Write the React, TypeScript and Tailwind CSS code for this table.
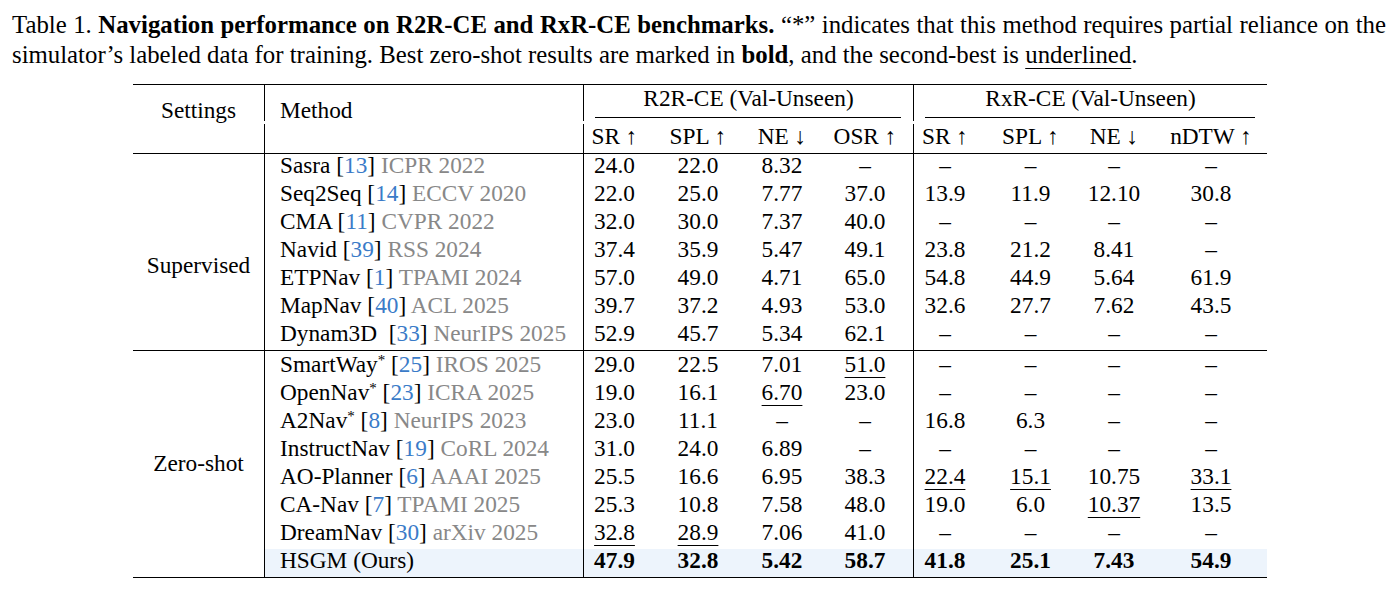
import React from "react";

const GRID = "grid grid-cols-[319px_73px_84px_84px_89px_75px_85px_89px_105px]";

const NUM_CLS = [
  "border-l border-black pr-[11px]",
  "",
  "",
  "pr-[7px]",
  "border-l border-black pr-[12px]",
  "",
  "pr-[7px]",
  "pr-[7px]",
];

type Row = {
  name: string;
  star?: boolean;
  cite?: string;
  venue?: string;
  vals: string[];
  bold?: boolean;
};

const supervised: Row[] = [
  { name: "Sasra", cite: "13", venue: "ICPR 2022", vals: ["24.0", "22.0", "8.32", "–", "–", "–", "–", "–"] },
  { name: "Seq2Seq", cite: "14", venue: "ECCV 2020", vals: ["22.0", "25.0", "7.77", "37.0", "13.9", "11.9", "12.10", "30.8"] },
  { name: "CMA", cite: "11", venue: "CVPR 2022", vals: ["32.0", "30.0", "7.37", "40.0", "–", "–", "–", "–"] },
  { name: "Navid", cite: "39", venue: "RSS 2024", vals: ["37.4", "35.9", "5.47", "49.1", "23.8", "21.2", "8.41", "–"] },
  { name: "ETPNav", cite: "1", venue: "TPAMI 2024", vals: ["57.0", "49.0", "4.71", "65.0", "54.8", "44.9", "5.64", "61.9"] },
  { name: "MapNav", cite: "40", venue: "ACL 2025", vals: ["39.7", "37.2", "4.93", "53.0", "32.6", "27.7", "7.62", "43.5"] },
  { name: "Dynam3D\u00a0", cite: "33", venue: "NeurIPS 2025", vals: ["52.9", "45.7", "5.34", "62.1", "–", "–", "–", "–"] },
];

const zeroShot: Row[] = [
  { name: "SmartWay", star: true, cite: "25", venue: "IROS 2025", vals: ["29.0", "22.5", "7.01", "u:51.0", "–", "–", "–", "–"] },
  { name: "OpenNav", star: true, cite: "23", venue: "ICRA 2025", vals: ["19.0", "16.1", "u:6.70", "23.0", "–", "–", "–", "–"] },
  { name: "A2Nav", star: true, cite: "8", venue: "NeurIPS 2023", vals: ["23.0", "11.1", "–", "–", "16.8", "6.3", "–", "–"] },
  { name: "InstructNav", cite: "19", venue: "CoRL 2024", vals: ["31.0", "24.0", "6.89", "–", "–", "–", "–", "–"] },
  { name: "AO-Planner", cite: "6", venue: "AAAI 2025", vals: ["25.5", "16.6", "6.95", "38.3", "u:22.4", "u:15.1", "10.75", "u:33.1"] },
  { name: "CA-Nav", cite: "7", venue: "TPAMI 2025", vals: ["25.3", "10.8", "7.58", "48.0", "19.0", "6.0", "u:10.37", "13.5"] },
  { name: "DreamNav", cite: "30", venue: "arXiv 2025", vals: ["u:32.8", "u:28.9", "7.06", "41.0", "–", "–", "–", "–"] },
  { name: "HSGM (Ours)", bold: true, vals: ["47.9", "32.8", "5.42", "58.7", "41.8", "25.1", "7.43", "54.9"] },
];

function Val({ v, bold }: { v: string; bold?: boolean }) {
  if (v.startsWith("u:")) {
    return <span className="underline decoration-[1px] underline-offset-[5px]">{v.slice(2)}</span>;
  }
  return <span className={bold ? "font-bold" : ""}>{v}</span>;
}

function DataRow({ r, first, hl }: { r: Row; first?: boolean; hl?: boolean }) {
  const h = first ? "h-[30px]" : "h-[28px]";
  const pt = first ? "pt-[2px]" : "";
  return (
    <div className={`${GRID} ${h} leading-[22px] ${hl ? "bg-[#edf4fc]" : ""}`}>
      <div className={`border-l border-black pl-[15px] whitespace-pre ${pt}`}>
        {r.name}
        {r.star && <sup className="text-[15px]">*</sup>}
        {r.cite && (
          <>
            {" ["}
            <span className="text-[#3a7bc8]">{r.cite}</span>
            {"] "}
            <span className="text-[#888888]">{r.venue}</span>
          </>
        )}
      </div>
      {r.vals.map((v, i) => (
        <div key={i} className={`text-center ${NUM_CLS[i]} ${pt}`}>
          <Val v={v} bold={r.bold} />
        </div>
      ))}
    </div>
  );
}

export default function App() {
  const heads = ["SR ↑", "SPL ↑", "NE ↓", "OSR ↑", "SR ↑", "SPL ↑", "NE ↓", "nDTW ↑"];
  return (
    <div className="font-['Liberation_Serif',serif] text-black bg-white w-[1396px] h-[590px]">
      <div className="h-[84px] pt-[10px] pl-[12px] pr-[10px] text-[24.8px] leading-[30px]">
        <div className="whitespace-nowrap text-justify [text-align-last:justify]">
          Table 1. <span className="font-bold">Navigation performance on R2R-CE and RxR-CE benchmarks.</span> “*” indicates that this method requires partial reliance on the
        </div>
        <div className="whitespace-nowrap">
          simulator’s labeled data for training. Best zero-shot results are marked in <span className="font-bold">bold</span>, and the second-best is{" "}
          <span className="underline decoration-[1px] underline-offset-[5px]">underlined</span>.
        </div>
      </div>

      <div className="ml-[133px] w-[1134px] border-t border-b border-black text-[23.3px]">
        {/* header row 1 */}
        <div className="grid grid-cols-[131px_319px_330px_354px] h-[27px] leading-[22px]">
          <div className="text-center pt-[14px]">Settings</div>
          <div className="border-l border-black pl-[15px] pt-[14px]">Method</div>
          <div className="border-l border-black text-center pt-[2px]">R2R-CE (Val-Unseen)</div>
          <div className="border-l border-black text-center pt-[2px]">RxR-CE (Val-Unseen)</div>
        </div>
        {/* band with cmidrules */}
        <div className="grid grid-cols-[131px_319px_330px_354px] h-[12px]">
          <div />
          <div />
          <div className="pt-[5px] px-[12px]">
            <div className="h-px bg-black" />
          </div>
          <div className="pt-[5px] px-[12px]">
            <div className="h-px bg-black" />
          </div>
        </div>
        {/* header row 2 */}
        <div className="flex h-[29px] leading-[22px]">
          <div className="w-[131px] shrink-0" />
          <div className={`${GRID} w-[1003px]`}>
            <div className="border-l border-black" />
            {heads.map((h, i) => (
              <div key={i} className={`text-center pt-[1px] ${NUM_CLS[i]}`}>
                {h}
              </div>
            ))}
          </div>
        </div>

        {/* body */}
        <div className="border-t border-black">
          <div className="flex">
            <div className="w-[131px] shrink-0 text-center pt-[100px] leading-[22px]">Supervised</div>
            <div className="w-[1003px]">
              {supervised.map((r, i) => (
                <DataRow key={i} r={r} />
              ))}
            </div>
          </div>
          <div className="flex border-t border-black">
            <div className="w-[131px] shrink-0 text-center pt-[101px] leading-[22px]">Zero-shot</div>
            <div className="w-[1003px]">
              {zeroShot.map((r, i) => (
                <DataRow key={i} r={r} first={i === 0} hl={i === zeroShot.length - 1} />
              ))}
            </div>
          </div>
        </div>
      </div>
    </div>
  );
}
